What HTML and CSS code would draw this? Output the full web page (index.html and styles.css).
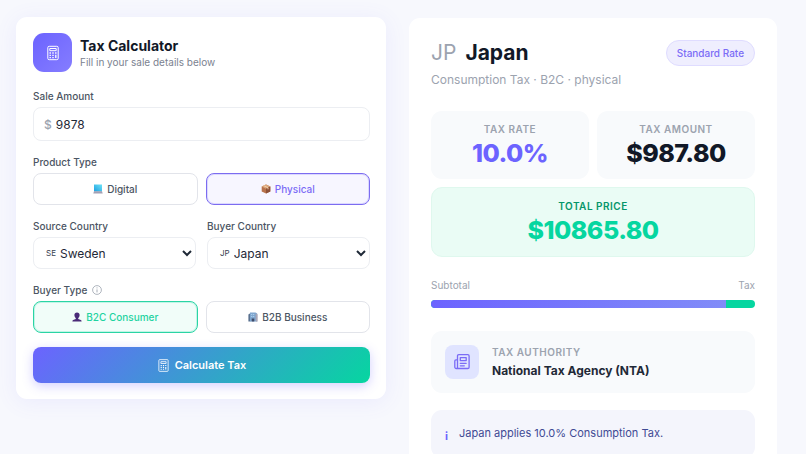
FILE: index.html
```html
<!DOCTYPE html>
<html lang="en">
<head>
    <meta charset="UTF-8">
    <meta name="viewport" content="width=device-width, initial-scale=1.0">
    <title>Tax Calculator</title>
    <link rel="stylesheet" href="styles.css">
</head>
<body>
<main class="page">
    <form class="card form-card">
        <div class="card-header">
            <div class="header-icon">
                <svg width="16" height="16" viewBox="0 0 16 16" fill="none" stroke="currentColor">
                    <rect x="2.8" y="1.3" width="10.4" height="13.4" rx="1.4"/>
                    <path d="M4.8 3.5h6.4v2.2H4.8z"/>
                    <path d="M4.5 8h1.4M7.3 8h1.4M10.1 8h1.4M4.5 10.3h1.4M7.3 10.3h1.4M4.5 12.6h1.4M7.3 12.6h1.4M10.8 9.8v3.2" stroke-width="1.3"/>
                </svg>
            </div>
            <div>
                <h1>Tax Calculator</h1>
                <p>Fill in your sale details below</p>
            </div>
        </div>

        <div class="field">
            <label for="amount">Sale Amount</label>
            <div class="amount-box">
                <span>$</span>
                <input type="text" id="amount" inputmode="decimal" value="9878">
            </div>
        </div>

        <div class="field">
            <span class="label" id="productLabel">Product Type</span>
            <div class="toggle-row" role="group" aria-labelledby="productLabel">
                <button type="button" class="toggle">
                    <svg width="10" height="10" viewBox="0 0 10 10">
                        <defs>
                            <linearGradient id="screen" x1="0" y1="1" x2="1" y2="0">
                                <stop offset="0" stop-color="#1b9fe0"/>
                                <stop offset="1" stop-color="#6fe3f7"/>
                            </linearGradient>
                        </defs>
                        <path d="M1 .5h8v7H1z" fill="url(#screen)"/>
                        <path d="M1 7.3h8l.7 2.2H.3z" fill="#a3a0b4"/>
                    </svg>
                    Digital
                </button>
                <button type="button" class="toggle active">
                    <svg width="10" height="10" viewBox="0 0 10 10">
                        <path d="M5 .5 9.3 2.5v5L5 9.6.7 7.5v-5z" fill="#b8734c"/>
                        <path d="M5 .5 9.3 2.5 5 4.7.7 2.5z" fill="#dba67c"/>
                        <path d="M5 4.7 9.3 2.5v5L5 9.6z" fill="#8d5138"/>
                        <path d="M2.6 1.6 7 3.7v1.6" stroke="#f0cfa9" fill="none"/>
                    </svg>
                    Physical
                </button>
            </div>
        </div>

        <div class="field country-row">
            <div>
                <label for="source">Source Country</label>
                <div class="select-box">
                    <span>SE</span>
                    <select id="source"><option>Sweden</option></select>
                </div>
            </div>
            <div>
                <label for="buyer">Buyer Country</label>
                <div class="select-box">
                    <span>JP</span>
                    <select id="buyer"><option>Japan</option></select>
                </div>
            </div>
        </div>

        <div class="field">
            <span class="label" id="buyerLabel">Buyer Type
                <svg class="info" width="10" height="10" viewBox="0 0 10 10" fill="none" stroke="currentColor">
                    <circle cx="5" cy="5" r="4.4" stroke-width=".8"/>
                    <path d="M5 4.4v3M5 2.4v1" stroke-width=".9"/>
                </svg>
            </span>
            <div class="toggle-row" role="group" aria-labelledby="buyerLabel">
                <button type="button" class="toggle active-green">
                    <svg width="10" height="10" viewBox="0 0 10 10" fill="#4a2b78">
                        <path d="M5 .4c1.7 0 2.6 1.1 2.6 2.7S6.6 6 6.2 6.3v.8l2.6.9c.6.3.8.8.8 1.6H.4c0-.8.2-1.3.8-1.6l2.6-.9v-.8C3.4 6 2.4 4.7 2.4 3.1S3.3.4 5 .4z"/>
                    </svg>
                    B2C Consumer
                </button>
                <button type="button" class="toggle">
                    <svg width="10" height="10" viewBox="0 0 10 10">
                        <path d="M.4 2.5 2.5 1v8.5H.4z" fill="#59718f"/>
                        <path d="M2 .5h5.5l1.7 1v8H2z" fill="#7fa6cf"/>
                        <path d="M3.2 2h1v1h-1zM5.2 2h1v1h-1zM3.2 4h1v1h-1zM5.2 4h1v1h-1z" fill="#b5d7f2"/>
                        <path d="M3.7 6.5h2.6v3H3.7z" fill="#3e4b68"/>
                        <path d="M7.7 1.4l1.9.8v7.3H7.7z" fill="#a9a5b5"/>
                    </svg>
                    B2B Business
                </button>
            </div>
        </div>

        <button type="submit" class="submit">
            <svg width="13" height="13" viewBox="0 0 16 16" fill="none" stroke="currentColor">
                <rect x="2.3" y=".8" width="11.4" height="14.4" rx="1"/>
                <path d="M4.8 3.3h6.4v2.2H4.8z"/>
                <path d="M4.5 8h1.4M7.3 8h1.4M10.1 8h1.4M4.5 10.3h1.4M7.3 10.3h1.4M4.5 12.6h1.4M7.3 12.6h1.4M10.8 9.8v3.2" stroke-width="1.3"/>
            </svg>
            Calculate Tax
        </button>
    </form>

    <section class="card result-card">
        <div class="result-header">
            <div>
                <h2><span>JP</span> Japan</h2>
                <p>Consumption Tax · B2C · physical</p>
            </div>
            <span class="badge">Standard Rate</span>
        </div>

        <div class="stats">
            <div class="stat">
                <div class="stat-label">Tax Rate</div>
                <div class="stat-value purple">10.0%</div>
            </div>
            <div class="stat">
                <div class="stat-label">Tax Amount</div>
                <div class="stat-value">$987.80</div>
            </div>
            <div class="stat total">
                <div class="stat-label">Total Price</div>
                <div class="stat-value">$10865.80</div>
            </div>
        </div>

        <div class="bar-labels"><span>Subtotal</span><span>Tax</span></div>
        <div class="bar"><div class="bar-fill" style="width: 90.9%"></div></div>

        <div class="authority">
            <div class="authority-icon">
                <svg width="18" height="18" viewBox="0 0 18 18" fill="none" stroke="currentColor" stroke-width="1.3" stroke-linecap="round" stroke-linejoin="round">
                    <path d="M4.5 15.5V3c0-.8.5-1.3 1.3-1.3h9c.8 0 1.3.5 1.3 1.3v11.2c0 .8-.5 1.3-1.3 1.3H3.2c-.8 0-1.4-.6-1.4-1.4V8c0-.7.4-1.1 1.1-1.1h1.6"/>
                    <path d="M7.3 4.6h5.9v3H7.3zM7.3 10.3h5.9M7.3 12.8h4"/>
                </svg>
            </div>
            <div>
                <div class="authority-label">Tax Authority</div>
                <div class="authority-name">National Tax Agency (NTA)</div>
            </div>
        </div>

        <div class="note">
            <span class="note-icon">i</span>
            <p>Japan applies 10.0% Consumption Tax.</p>
        </div>
    </section>
</main>
</body>
</html>
```
FILE: styles.css
```css
* {
    box-sizing: border-box;
    margin: 0;
    padding: 0;
}
body {
    font-family: Inter, "Liberation Sans", sans-serif;
    background: #f7f8fd;
    color: #111827;
}
button, input, select {
    font-family: inherit;
}
svg {
    flex: none;
}
.page {
    display: grid;
    grid-template-columns: 370fr 368fr;
    gap: 23px;
    align-items: start;
    padding: 17px 29px 17px 16px;
}
.card {
    background: #fff;
    border-radius: 11px;
}
.form-card {
    padding: 16px 16px 16px 17px;
    box-shadow: 0 3px 22px rgba(108, 99, 255, 0.09);
}
.card-header {
    display: flex;
    align-items: center;
    gap: 8px;
    margin-bottom: 18px;
}
.header-icon {
    display: flex;
    align-items: center;
    justify-content: center;
    width: 39px;
    height: 39px;
    border-radius: 11px;
    background: linear-gradient(135deg, #6c63ff, #857dff);
    color: #fff;
}
h1 {
    padding-top: 2px;
    font-size: 14px;
    line-height: 18px;
    font-weight: 700;
}
.card-header p {
    font-size: 10px;
    line-height: 15px;
    color: #7b8290;
}
.field {
    margin-bottom: 15px;
}
label, .label {
    display: flex;
    align-items: center;
    gap: 5px;
    margin-bottom: 5px;
    font-size: 10px;
    line-height: 12px;
    font-weight: 500;
    color: #4b5563;
}
.info {
    color: #9ca3af;
}
.amount-box {
    display: flex;
    align-items: center;
    gap: 4px;
    height: 34px;
    padding: 0 10px;
    border: 1px solid #eceef2;
    border-radius: 8px;
    font-size: 12px;
}
.amount-box span {
    color: #9ca3af;
    font-weight: 500;
}
.amount-box input {
    flex: 1;
    min-width: 0;
    border: none;
    outline: none;
    background: none;
    font-size: 12px;
    color: #1f2937;
}
.toggle-row {
    display: grid;
    grid-template-columns: 1fr 1fr;
    gap: 8px;
}
.toggle {
    display: flex;
    align-items: center;
    justify-content: center;
    gap: 4px;
    height: 32px;
    border: 1px solid #e2e4ea;
    border-radius: 8px;
    background: #fff;
    font-size: 10px;
    font-weight: 500;
    color: #4b5563;
    cursor: pointer;
}
.toggle.active {
    border-color: #7c6cf0;
    background: #f7f6ff;
    color: #7b6cf6;
    box-shadow: inset 0 0 0 1px rgba(108, 99, 255, 0.2);
}
.toggle.active-green {
    border-color: #2bd4a4;
    background: #f1fdf9;
    color: #1fd3a1;
    box-shadow: inset 0 0 0 1px rgba(6, 214, 160, 0.2);
}
.country-row {
    display: grid;
    grid-template-columns: 1fr 1fr;
    gap: 11px;
}
.select-box {
    display: flex;
    align-items: center;
    height: 32px;
    padding-left: 12px;
    border: 1px solid #eceef2;
    border-radius: 8px;
}
.select-box span {
    font-size: 8px;
    color: #374151;
}
.select-box select {
    flex: 1;
    min-width: 0;
    height: 30px;
    border: none;
    outline: none;
    background: none;
    font-size: 12px;
    color: #1f2937;
}
.submit {
    display: flex;
    align-items: center;
    justify-content: center;
    gap: 5px;
    width: 100%;
    height: 36px;
    border: none;
    border-radius: 8px;
    background: linear-gradient(135deg, #6c63ff, #06d6a0);
    box-shadow: 0 3px 11px rgba(108, 99, 255, 0.3);
    font-size: 11px;
    font-weight: 600;
    color: #fff;
    cursor: pointer;
}
.form-card .field:nth-last-child(2) {
    margin-bottom: 14px;
}

.result-card {
    margin-top: 1px;
    padding: 22px;
}
.result-header {
    display: flex;
    align-items: flex-start;
    justify-content: space-between;
    margin-bottom: 23px;
}
h2 {
    display: flex;
    gap: 9px;
    font-size: 21px;
    line-height: 26px;
    font-weight: 700;
}
h2 span {
    font-weight: 400;
    color: #9ca3af;
}
.result-header p {
    margin-top: 6px;
    font-size: 12px;
    line-height: 16px;
    color: #9ca3af;
}
.badge {
    padding: 6px 10px;
    border: 1px solid #dfdcff;
    border-radius: 13px;
    background: #efeefe;
    font-size: 10px;
    line-height: 12px;
    font-weight: 500;
    color: #7b6cf6;
}
.stats {
    display: grid;
    grid-template-columns: 1fr 1fr;
    gap: 8px;
    margin-bottom: 22px;
}
.stat {
    padding: 11px;
    border-radius: 11px;
    background: #f8fafc;
    text-align: center;
}
.stat-label {
    font-size: 10px;
    line-height: 14px;
    font-weight: 600;
    letter-spacing: 0.5px;
    text-transform: uppercase;
    color: #9ca3af;
}
.stat-value {
    margin-top: 2px;
    font-size: 25px;
    line-height: 30px;
    font-weight: 800;
    letter-spacing: -0.5px;
}
.purple {
    color: #6c63ff;
}
.total {
    grid-column: 1 / -1;
    border: 1px solid #dff8ee;
    background: #eafcf5;
}
.total .stat-label {
    color: #059669;
}
.total .stat-value {
    color: #06d6a0;
}
.bar-labels {
    display: flex;
    justify-content: space-between;
    margin-bottom: 8px;
    font-size: 10px;
    line-height: 13px;
    color: #9ca3af;
}
.bar {
    height: 8px;
    margin-bottom: 23px;
    border-radius: 4px;
    overflow: hidden;
    background: #06d6a0;
}
.bar-fill {
    height: 100%;
    background: linear-gradient(90deg, #6c63ff, #818cf8);
}
.authority {
    display: flex;
    align-items: center;
    gap: 13px;
    margin-bottom: 17px;
    padding: 14px;
    border-radius: 11px;
    background: #f8fafc;
}
.authority-icon {
    display: flex;
    align-items: center;
    justify-content: center;
    width: 34px;
    height: 34px;
    border-radius: 8px;
    background: #e0e4ff;
    color: #7b6cf6;
}
.authority-label {
    font-size: 10px;
    line-height: 14px;
    font-weight: 600;
    letter-spacing: 0.5px;
    text-transform: uppercase;
    color: #9ca3af;
}
.authority-name {
    margin-top: 4px;
    font-size: 12px;
    line-height: 16px;
    font-weight: 700;
    color: #1f2937;
}
.note {
    display: flex;
    gap: 11px;
    padding: 14px;
    border-radius: 11px;
    background: #f4f5fc;
}
.note-icon {
    padding-top: 4px;
    font-size: 11px;
    line-height: 16px;
    font-weight: 700;
    color: #6c63ff;
}
.note p {
    font-size: 11px;
    line-height: 18px;
    color: #3f4a94;
}
```
